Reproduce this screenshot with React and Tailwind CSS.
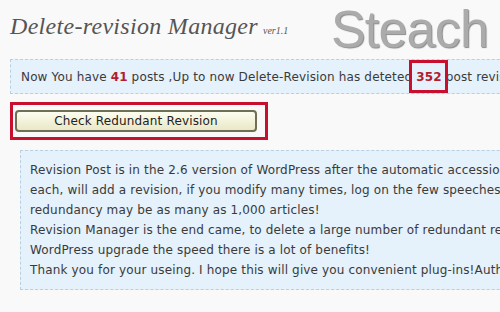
export default function App() {
  const lines = [
    'Revision Post is in the 2.6 version of WordPress after the automatic accession',
    'each, will add a revision, if you modify many times, log on the few speeches,',
    'redundancy may be as many as 1,000 articles!',
    'Revision Manager is the end came, to delete a large number of redundant revisions',
    'WordPress upgrade the speed there is a lot of benefits!',
    'Thank you for your useing. I hope this will give you convenient plug-ins!Author',
  ];

  return (
    <div className="w-[500px] h-[312px] overflow-hidden bg-[#f9f9f9] font-['DejaVu_Sans',Verdana,sans-serif] text-[12px] tracking-[0.15px] text-[#3a3a3a]">
      {/* Header */}
      <div className="flex items-start h-[59px]">
        <div className="pl-[10px] pt-[12px] flex items-baseline tracking-normal">
          <h1 className="font-['Liberation_Serif',serif] italic text-[24px] leading-[28px] text-[#555] tracking-[0.3px]">
            Delete-revision Manager
          </h1>
          <span className="ml-[5px] font-['Liberation_Serif',serif] italic text-[10px] text-[#555]">ver1.1</span>
        </div>
        <div className="ml-auto mr-[12px] pt-[3px] font-['Liberation_Sans',Arial,sans-serif] text-[52px] leading-[52px] tracking-[-0.8px] text-[#ababab] [text-shadow:1px_1px_1px_#8a8a8a]">
          Steach
        </div>
      </div>

      {/* Status */}
      <div className="ml-[10px] w-[560px] h-[35px] border border-dashed border-[#b9d0e2] bg-[#e5f1fb] flex items-center pl-[10px] whitespace-nowrap">
        <span>
          Now You have <b className="text-[#b21c2c]">41</b> posts ,Up to now Delete-Revision has deteted{' '}
          <span className="relative inline-block">
            <b className="text-[#b21c2c]">352</b>
            <span className="absolute left-[-7px] right-[-6px] top-[-8px] bottom-[-7px] border-[3px] border-[#c8102e]" />
          </span>{' '}
          post revisions
        </span>
      </div>

      {/* Button */}
      <div className="mt-[8px] ml-[10px] w-[258px] h-[38px] border-[3px] border-[#c8102e] pl-[2px] pt-[5px]">
        <button className="w-[242px] h-[22px] rounded-[4px] border-2 border-[#6f6f55] bg-gradient-to-b from-[#fdfdf0] to-[#e9e8c6] text-[12px] tracking-[0.15px] text-[#222] font-['DejaVu_Sans',Verdana,sans-serif] leading-none">
          Check Redundant Revision
        </button>
      </div>

      {/* Info */}
      <div className="mt-[10px] ml-[20px] w-[560px] border border-dashed border-[#b9d0e2] bg-[#e5f1fb] px-[9px] py-[9px] leading-[20px] whitespace-nowrap">
        {lines.map((l) => (
          <div key={l}>{l}</div>
        ))}
      </div>
    </div>
  );
}
